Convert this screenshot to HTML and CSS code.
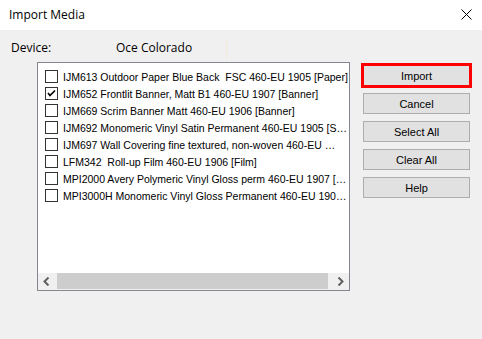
FILE: index.html
```html
<!DOCTYPE html>
<html>
<head>
<meta charset="utf-8">
<link rel="stylesheet" href="styles.css">
</head>
<body>
<div class="dialog">
  <div class="titlebar">
    <span class="title">Import Media</span>
    <svg class="close" width="11" height="11" viewBox="0 0 11 11"><path d="M0.5 0.5 L10.5 10.5 M10.5 0.5 L0.5 10.5" stroke="#000" stroke-width="1" fill="none"/></svg>
  </div>
  <div class="device-row">
    <span class="device-label">Device:</span>
    <span class="device-value">Oce Colorado</span>
    <span class="divider"></span>
  </div>
  <div class="main">
    <div class="listbox">
      <div class="rows">
        <div class="row"><span class="cb"></span><span class="label">IJM613 Outdoor Paper Blue Back&nbsp; FSC 460-EU 1905 [Paper]</span></div>
        <div class="row"><span class="cb"><svg width="11" height="11" viewBox="0 0 11 11"><path d="M2 5 L4 7.5 L9 2.5" stroke="#000" stroke-width="1.6" fill="none"/></svg></span><span class="label">IJM652 Frontlit Banner, Matt B1 460-EU 1907 [Banner]</span></div>
        <div class="row"><span class="cb"></span><span class="label">IJM669 Scrim Banner Matt 460-EU 1906 [Banner]</span></div>
        <div class="row"><span class="cb"></span><span class="label">IJM692 Monomeric Vinyl Satin Permanent 460-EU 1905 [S…</span></div>
        <div class="row"><span class="cb"></span><span class="label">IJM697 Wall Covering fine textured, non-woven 460-EU …</span></div>
        <div class="row"><span class="cb"></span><span class="label">LFM342&nbsp; Roll-up Film 460-EU 1906 [Film]</span></div>
        <div class="row"><span class="cb"></span><span class="label">MPI2000 Avery Polymeric Vinyl Gloss perm 460-EU 1907 […</span></div>
        <div class="row"><span class="cb"></span><span class="label">MPI3000H Monomeric Vinyl Gloss Permanent 460-EU 190…</span></div>
      </div>
      <div class="hscroll">
        <span class="arrow"><svg width="7" height="9" viewBox="0 0 7 9"><path d="M5.5 0.5 L1.5 4.5 L5.5 8.5" stroke="#606060" stroke-width="2" fill="none"/></svg></span>
        <span class="track"><span class="thumb"></span></span>
        <span class="arrow"><svg width="7" height="9" viewBox="0 0 7 9"><path d="M1.5 0.5 L5.5 4.5 L1.5 8.5" stroke="#606060" stroke-width="2" fill="none"/></svg></span>
      </div>
    </div>
    <div class="buttons">
      <button class="btn default">Import</button>
      <button class="btn">Cancel</button>
      <button class="btn">Select All</button>
      <button class="btn">Clear All</button>
      <button class="btn">Help</button>
    </div>
  </div>
</div>
</body>
</html>
```
FILE: styles.css
```css
html, body {
  margin: 0;
  padding: 0;
}
body {
  width: 482px;
  height: 339px;
  background: #f0f0f0;
  overflow: hidden;
}
.dialog {
  width: 482px;
  height: 339px;
  display: flex;
  flex-direction: column;
  font-family: "Liberation Sans", Arial, sans-serif;
  color: #000;
}
.titlebar {
  height: 30px;
  background: #fff;
  display: flex;
  align-items: center;
  justify-content: space-between;
  padding: 0 10px 0 9px;
  box-sizing: border-box;
}
.title {
  font-family: "Open Sans", "Noto Sans", sans-serif;
  font-size: 12px;
  margin-top: -1px;
}
.close {
  margin-top: -1px;
}
.device-row {
  height: 32px;
  box-sizing: border-box;
  padding-top: 3px;
  display: flex;
  align-items: center;
  font-family: "Open Sans", "Noto Sans", sans-serif;
  font-size: 12px;
  padding-left: 11px;
}
.device-label {
  width: 105px;
}
.device-value {
  width: 110px;
}
.divider {
  width: 1px;
  height: 22px;
  background: #f3ead9;
  margin-top: 2px;
}
.main {
  display: flex;
  align-items: flex-start;
  padding-left: 37px;
}
.listbox {
  width: 313px;
  height: 229px;
  box-sizing: border-box;
  border: 1px solid #828790;
  background: #fff;
  display: flex;
  flex-direction: column;
  overflow: hidden;
}
.rows {
  flex: 1;
  padding: 5px 0 0 7px;
}
.row {
  height: 17px;
  display: flex;
  align-items: center;
  font-size: 10.5px;
}
.cb {
  width: 13px;
  height: 13px;
  box-sizing: border-box;
  border: 1px solid #333;
  background: #fff;
  display: flex;
  align-items: center;
  justify-content: center;
  flex-shrink: 0;
  margin-right: 5px;
}
.label {
  white-space: pre;
}
.hscroll {
  height: 17px;
  display: flex;
  background: #f0f0f0;
}
.arrow {
  width: 17px;
  display: flex;
  align-items: center;
  justify-content: center;
}
.track {
  flex: 1;
  display: flex;
  padding: 0 4px 0 2px;
}
.thumb {
  flex: 1;
  background: #cdcdcd;
  margin: 0 0 1px 0;
}
.buttons {
  display: flex;
  flex-direction: column;
  gap: 7px;
  margin-left: 13px;
  margin-top: 3px;
}
.btn {
  width: 107px;
  height: 21px;
  box-sizing: border-box;
  background: #e1e1e1;
  border: 1px solid #adadad;
  font-family: "Liberation Sans", Arial, sans-serif;
  font-size: 11px;
  color: #000;
  padding: 0;
  margin: 0;
}
.btn.default {
  outline: 3px solid #ff0000;
  outline-offset: -1px;
  border-radius: 0;
}
```
